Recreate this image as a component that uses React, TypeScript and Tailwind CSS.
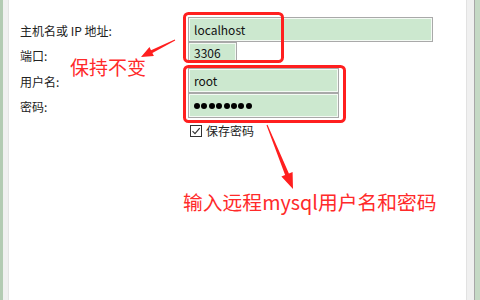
import { ReactNode } from 'react'

const cjk = { fontFamily: '"Noto Sans CJK SC", "Noto Sans", sans-serif' }

function Field({ width, height, children }: { width: string; height: string; children?: ReactNode }) {
  return (
    <div className={`${width} ${height} border border-[#a9a9a9] bg-[#cce8cf] shadow-[inset_0_0_0_1px_#f4faf4] flex items-center pl-[5px] text-[12px] text-[#111]`}>
      {children}
    </div>
  )
}

function Row({ label, children, className = '' }: { label: string; children: ReactNode; className?: string }) {
  return (
    <div className={`flex ${className}`}>
      <div className="w-[168px] text-[12px] leading-none text-[#222] pt-[8px]">{label}</div>
      {children}
    </div>
  )
}

export default function App() {
  return (
    <div className="relative flex h-[300px] w-[480px] overflow-hidden bg-white" style={cjk}>
      {/* left window frame */}
      <div className="w-[3px] bg-[#b3cbb3]" />
      <div className="w-[6px] bg-[#f0f0f0] border-r border-[#e4e4e4]" />

      <div className="flex-1 pl-[11px] pt-[17px]">
        <Row label="主机名或 IP 地址:">
          <Field width="w-[245px]" height="h-[25px]">localhost</Field>
        </Row>
        <Row label="端口:">
          <Field width="w-[49px]" height="h-[21px]">3306</Field>
        </Row>
        <Row label="用户名:" className="mt-[5px]">
          <Field width="w-[151px]" height="h-[25px]">root</Field>
        </Row>
        <Row label="密码:">
          <Field width="w-[151px]" height="h-[25px]">
            <div className="flex gap-[1.4px]">
              {[0, 1, 2, 3, 4, 5, 6, 7].map((i) => (
                <span key={i} className="h-[6px] w-[6px] rounded-full bg-black" />
              ))}
            </div>
          </Field>
        </Row>
        <div className="ml-[170px] mt-[7px] flex items-center gap-[4px]">
          <div className="flex h-[12px] w-[12px] items-center justify-center border border-[#333] bg-white">
            <svg width="10" height="10" viewBox="0 0 10 10">
              <path d="M1.5 5.2 L4 7.7 L8.7 2.2" fill="none" stroke="#333" strokeWidth="1.2" />
            </svg>
          </div>
          <span className="text-[12px] leading-none text-[#222]">保存密码</span>
        </div>
      </div>

      {/* right window frame */}
      <div className="w-[8px] bg-[#f0f0f0] border-l border-[#e2e2e2]" />
      <div className="w-[1px] bg-[#a8a8a8]" />
      <div className="w-[5px] bg-[#c5d9c5]" />

      {/* annotations */}
      <svg className="pointer-events-none absolute left-0 top-0" width="480" height="300">
        <rect x="184.5" y="13.5" width="98" height="48" rx="4" fill="none" stroke="#ff1f1f" strokeWidth="3" />
        <rect x="184.5" y="66.5" width="160" height="55" rx="4" fill="none" stroke="#ff1f1f" strokeWidth="3" />
        <polygon
          points="175.2,40.4 152.4,52.9 153.9,56.1 141,57 149.5,47.1 151,50.3 174.8,39.6"
          fill="#ff1f1f"
        />
        <polygon
          points="266.5,125.2 285.1,174.9 281.4,176.5 293,189 292.6,171.9 288.9,173.4 267.5,124.8"
          fill="#ff1f1f"
        />
      </svg>
      <div className="absolute left-[70px] top-[57px] text-[19px] leading-none text-[#ff2a2a]">保持不变</div>
      <div className="absolute left-[183px] top-[192px] text-[19.8px] leading-none text-[#ff2a2a]">输入远程mysql用户名和密码</div>
    </div>
  )
}
